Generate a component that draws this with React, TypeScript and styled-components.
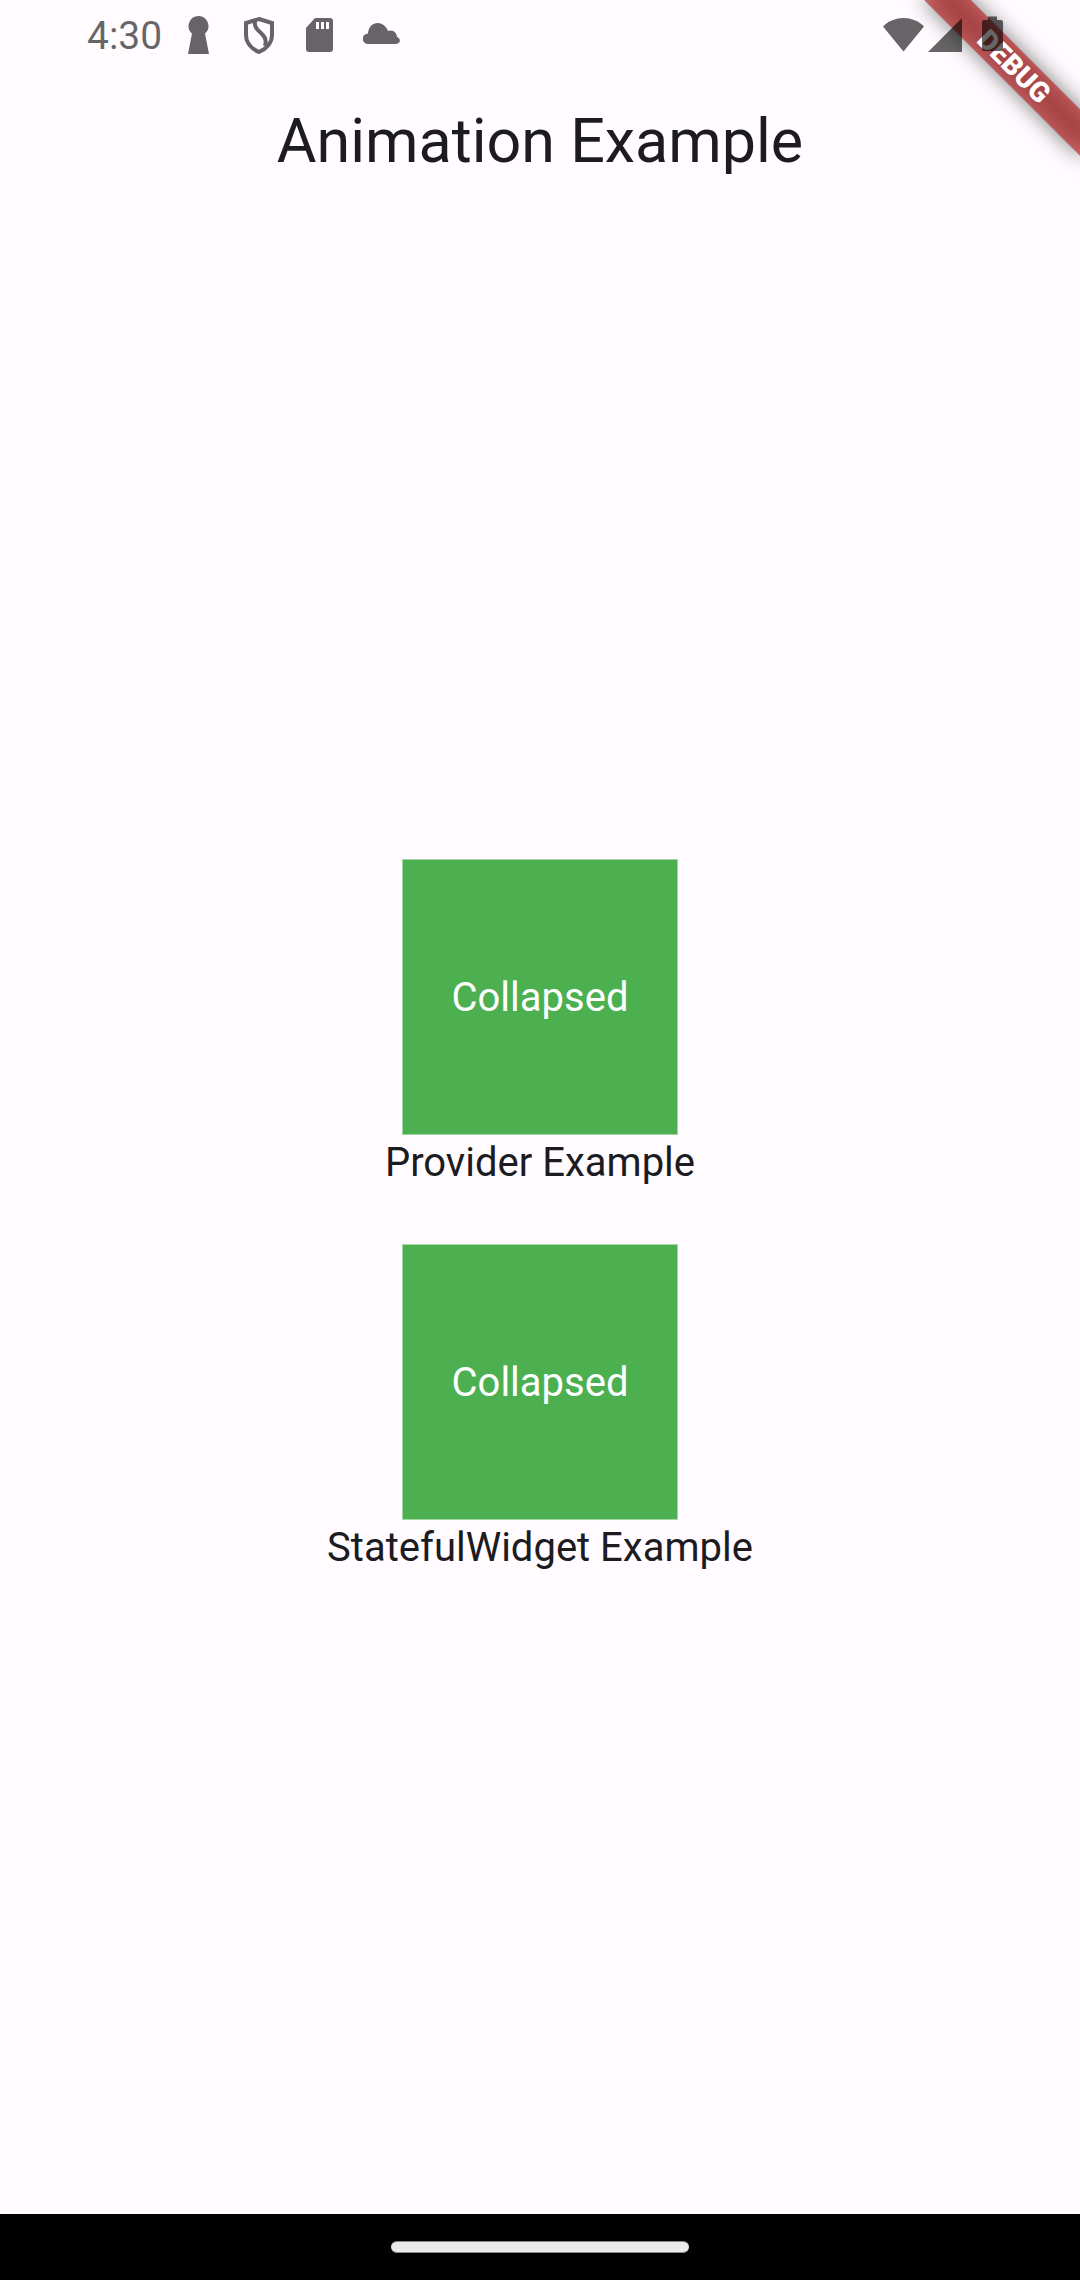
import React, { useState } from 'react';
import styled, { createGlobalStyle } from 'styled-components';

const GlobalStyle = createGlobalStyle`
  *, *::before { box-sizing: border-box; }
  body {
    margin: 0;
    background: #fffbff;
    color: #1c1b1f;
    font-family: Roboto, "Noto Sans", sans-serif;
  }
`;

const Screen = styled.div`
  position: relative;
  display: flex;
  flex-direction: column;
  min-height: 100vh;
`;

const StatusBar = styled.header`
  position: relative;
  z-index: 2;
  display: flex;
  align-items: center;
  justify-content: space-between;
  height: 66px;
  padding: 0 76px 0 87px;
  color: rgba(0, 0, 0, 0.6);
`;

const StatusGroup = styled.div<{ $gap: number }>`
  display: flex;
  align-items: flex-start;
  gap: ${(p) => p.$gap}px;
  height: 46px;
`;

const Clock = styled.time`
  width: 84px;
  font-size: 39px;
  line-height: 52px;
`;

const Glyph = styled.svg`
  display: block;
  fill: currentColor;
`;

const AppBar = styled.div`
  display: flex;
  align-items: center;
  justify-content: center;
  height: 149px;
`;

const Title = styled.h1`
  margin: 0;
  font-size: 61px;
  font-weight: 400;
  line-height: 76px;
`;

const Body = styled.main`
  flex: 1;
  display: flex;
  flex-direction: column;
  align-items: center;
  justify-content: center;
  gap: 53px;
  padding-top: 6px;
`;

const Example = styled.section`
  display: flex;
  flex-direction: column;
  align-items: center;
`;

const Tile = styled.button<{ $open: boolean }>`
  width: ${(p) => (p.$open ? 552 : 276)}px;
  height: ${(p) => (p.$open ? 552 : 276)}px;
  padding: 2px 0 0;
  border: 1px solid #a5d5a7;
  background: #4caf50;
  color: #ffffff;
  font: inherit;
  font-size: 40px;
  line-height: 56px;
  transition: width 0.3s, height 0.3s;
`;

const Caption = styled.p`
  margin: 0;
  font-size: 40px;
  line-height: 56px;
`;

const BannerCorner = styled.div`
  position: absolute;
  top: 0;
  right: 0;
  width: 220px;
  height: 220px;
  overflow: hidden;
  pointer-events: none;
`;

const Ribbon = styled.div`
  position: absolute;
  top: 50px;
  left: 44px;
  width: 220px;
  height: 33px;
  transform: rotate(45deg);

  &::before {
    content: '';
    position: absolute;
    inset: 0;
    background: rgba(0, 0, 0, 0.5);
    filter: blur(11px);
  }
`;

const RibbonLabel = styled.span`
  position: relative;
  display: block;
  background: rgba(183, 28, 28, 0.63);
  color: #ffffff;
  font-size: 28px;
  font-weight: 900;
  line-height: 33px;
  text-align: center;
`;

const NavigationBar = styled.footer`
  display: flex;
  align-items: center;
  justify-content: center;
  height: 66px;
  background: #000000;
`;

const HomeHandle = styled.div`
  width: 298px;
  height: 12px;
  border: 1px solid #8a8a8a;
  border-width: 1px 0;
  border-radius: 6px;
  background: #ebebeb;
`;

function ExpandingExample({ caption }: { caption: string }) {
  const [open, setOpen] = useState(false);
  return (
    <Example>
      <Tile type="button" $open={open} aria-expanded={open} onClick={() => setOpen(!open)}>
        {open ? 'Expanded' : 'Collapsed'}
      </Tile>
      <Caption>{caption}</Caption>
    </Example>
  );
}

export default function App() {
  return (
    <Screen>
      <GlobalStyle />
      <StatusBar>
        <StatusGroup $gap={16}>
          <Clock>4:30</Clock>
          <StatusGroup $gap={30}>
            <Glyph width="24" height="46" viewBox="0 0 24 46" aria-hidden="true">
              <path d="M12 6a10 10 0 0 1 6 17.500L22 44H1L5 23.500A10 10 0 0 1 12 6Z" />
            </Glyph>
            <Glyph width="34" height="46" viewBox="0 0 34 46" aria-hidden="true">
              <path
                d="M18 9 31 13V25C31 33 25 39 18 42 11 39 5 33 5 25V13ZM14 11C12 23 28 22 24 36"
                fill="none"
                stroke="currentColor"
                strokeWidth="4"
              />
            </Glyph>
            <Glyph width="28" height="46" viewBox="0 0 28 46" aria-hidden="true">
              <path
                fillRule="evenodd"
                d="M11 8H26a3 3 0 0 1 3 3V39a3 3 0 0 1-3 3H5a3 3 0 0 1-3-3V18ZM12 12V19H15V12ZM17 12V19H20V12ZM22 12V19H25V12Z"
                transform="translate(-1 0)"
              />
            </Glyph>
            <Glyph width="38" height="46" viewBox="0 0 38 46" aria-hidden="true">
              <path d="M5 34a5 5 0 0 1 0-10.500C6 10 21 10 25 21C30 19 34 23 34 27C38 28 38 34 33 34Z" />
            </Glyph>
          </StatusGroup>
        </StatusGroup>
        <StatusGroup $gap={4}>
          <Glyph width="41" height="46" viewBox="0 0 41 46" aria-hidden="true">
            <path d="M20.500 41.500 0 16.500C11 5 30 5 41 16.500Z" />
          </Glyph>
          <Glyph width="34" height="46" viewBox="0 0 34 46" aria-hidden="true">
            <path d="M0 42H34V8Z" />
          </Glyph>
          <Glyph width="38" height="46" viewBox="0 0 38 46" aria-hidden="true">
            <path d="M22 6.500h9V10h4a2 2 0 0 1 2 2V39a2 2 0 0 1-2 2H18a2 2 0 0 1-2-2V12a2 2 0 0 1 2-2h4Z" />
          </Glyph>
        </StatusGroup>
      </StatusBar>
      <AppBar>
        <Title>Animation Example</Title>
      </AppBar>
      <Body>
        <ExpandingExample caption="Provider Example" />
        <ExpandingExample caption="StatefulWidget Example" />
      </Body>
      <NavigationBar>
        <HomeHandle />
      </NavigationBar>
      <BannerCorner>
        <Ribbon>
          <RibbonLabel>DEBUG</RibbonLabel>
        </Ribbon>
      </BannerCorner>
    </Screen>
  );
}
